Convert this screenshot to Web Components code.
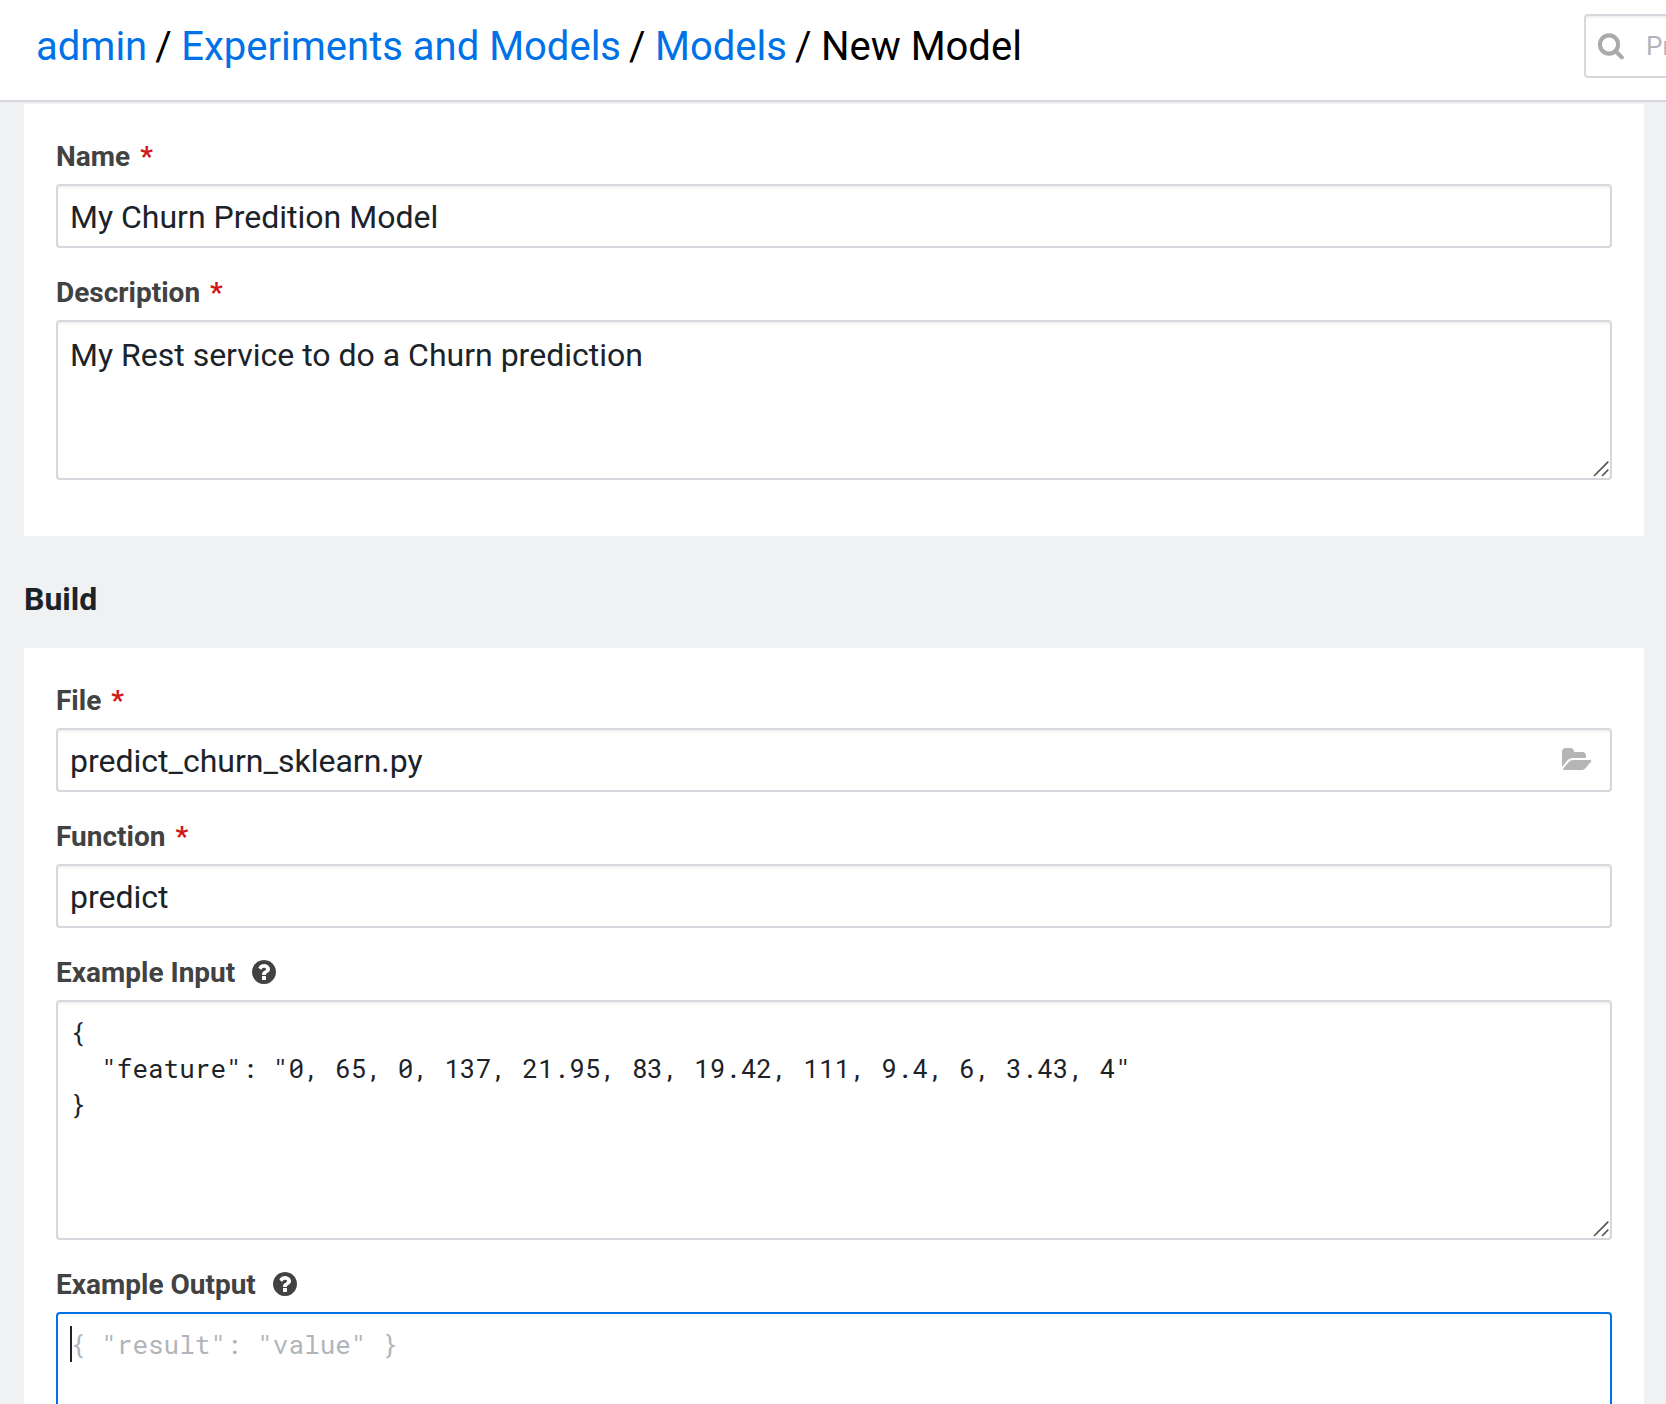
<!DOCTYPE html>
<html lang="en">
<head>
<meta charset="utf-8">
<title>New Model</title>
<style>
html, body { margin: 0; height: 100%; overflow: hidden; }
body { font-family: Roboto, "Liberation Sans", sans-serif; background: #f0f1f3; color: #1b2329; }
</style>
</head>
<body>
<app-page>
  <top-bar slot="header">
    <bread-crumbs>
      <crumb-item link>admin</crumb-item>
      <crumb-item link>Experiments and Models</crumb-item>
      <crumb-item link>Models</crumb-item>
      <crumb-item>New Model</crumb-item>
    </bread-crumbs>
    <search-box slot="end">Pr</search-box>
  </top-bar>
  <form-card>
    <form-field label="Name" required><text-box>My Churn Predition Model</text-box></form-field>
    <form-field label="Description" required><text-area style="height:160px">My Rest service to do a Churn prediction</text-area></form-field>
  </form-card>
  <section-title>Build</section-title>
  <form-card>
    <form-field label="File" required><text-box browse>predict_churn_sklearn.py</text-box></form-field>
    <form-field label="Function" required><text-box>predict</text-box></form-field>
    <form-field label="Example Input" help><text-area code style="height:240px">{
  "feature": "0, 65, 0, 137, 21.95, 83, 19.42, 111, 9.4, 6, 3.43, 4"
}</text-area></form-field>
    <form-field label="Example Output" help><text-area code focused style="height:240px">{ "result": "value" }</text-area></form-field>
  </form-card>
</app-page>
<script>
const define = (name, render) => customElements.define(name, class extends HTMLElement {
  constructor() {
    super();
    this.attachShadow({ mode: 'open' }).innerHTML = render(this);
  }
});

define('app-page', () => `
<style>
:host { display: flex; flex-direction: column; height: 100vh; overflow: hidden; }
main { display: flex; flex-direction: column; padding: 2px 22px 0 24px; }
</style>
<slot name="header"></slot><main><slot></slot></main>`);

define('top-bar', () => `
<style>
:host { display: flex; flex: none; justify-content: space-between; align-items: center; height: 102px; box-sizing: border-box; padding: 0 0 8px 36px; background: #fff; border-bottom: 2px solid #d7d7dd; overflow: hidden; }
</style>
<slot></slot><slot name="end"></slot>`);

define('bread-crumbs', () => `
<style>
:host { display: flex; padding-top: 2px; font-size: 40px; line-height: 48px; color: #000; white-space: nowrap; }
</style>
<slot></slot>`);

define('crumb-item', el => `
<style>
:host { display: flex; }
:host([link]) .label { color: #0072e7; }
.sep { padding: 0 9.5px 0 8px; }
</style>
<span class="label"><slot></slot></span>${el.hasAttribute('link') ? '<span class="sep">/</span>' : ''}`);

define('search-box', () => `
<style>
:host { display: flex; flex: none; align-items: center; width: 300px; height: 64px; margin-right: -218px; box-sizing: border-box; border: 2px solid #d7d7dd; border-radius: 4px; background: #fff; box-shadow: inset 0 2px 2px rgba(0,0,0,.06); color: #afb5ba; font-size: 26px; padding-left: 12px; gap: 21px; white-space: nowrap; overflow: hidden; }
svg { display: block; flex: none; }
</style>
<svg width="27" height="27" viewBox="0 0 27 27" fill="none" stroke="#aaa" stroke-width="4.1"><circle cx="11" cy="11.5" r="9.1"/><path d="M17.5 18L23.8 24.4" stroke-linecap="round"/></svg>
<span><slot></slot></span>`);

define('form-card', () => `
<style>
:host { display: flex; flex-direction: column; gap: 28px; background: #fff; padding: 36px 32px 56px; }
</style>
<slot></slot>`);

define('section-title', () => `
<style>
:host { display: flex; align-items: center; height: 112px; padding-top: 13px; box-sizing: border-box; font-size: 32px; font-weight: 700; }
</style>
<slot></slot>`);

define('help-icon', () => `
<style>:host { display: block; white-space: normal; } svg { display: block; }</style>
<svg width="28" height="28" viewBox="0 0 1792 1792" fill="#424242"><path d="M1024 1376v-192q0-14-9-23t-23-9h-192q-14 0-23 9t-9 23v192q0 14 9 23t23 9h192q14 0 23-9t9-23zm256-672q0-88-55.5-163t-138.5-116-170-41q-243 0-371 213-15 24 8 42l132 100q7 6 19 6 16 0 25-12 53-68 86-92 34-24 86-24 48 0 85.5 26t37.5 59q0 38-20 61t-68 45q-63 28-115.5 86.5t-52.5 125.5v36q0 14 9 23t23 9h192q14 0 23-9t9-23q0-19 21.5-49.5t54.5-49.5q32-18 49-28.5t46-35 44.5-48 28-60.5 12.5-81zm384 192q0 209-103 385.5t-279.5 279.5-385.5 103-385.5-103-279.5-279.5-103-385.5 103-385.5 279.5-279.5 385.5-103 385.5 103 279.5 279.5 103 385.5z"/></svg>`);

define('form-field', el => `
<style>
:host { display: flex; flex-direction: column; gap: 12px; }
.label { display: flex; align-items: center; height: 32px; font-size: 28px; line-height: 34px; font-weight: 700; color: #424242; white-space: pre; }
.label span { padding-top: 1px; }
.req { color: #d0171a; margin-left: 10px; }
help-icon { margin-left: 15px; }
</style>
<div class="label"><span>${el.getAttribute('label')}</span>${el.hasAttribute('required') ? '<span class="req">*</span>' : ''}${el.hasAttribute('help') ? '<help-icon></help-icon>' : ''}</div>
<slot></slot>`);

define('text-box', el => `
<style>
:host { display: flex; align-items: center; justify-content: space-between; height: 64px; box-sizing: border-box; border: 2px solid #d7d7dd; border-radius: 4px; background: #fff; box-shadow: inset 0 2px 2px rgba(0,0,0,.06); padding: 0 18px 0 12px; font-size: 32px; line-height: 38px; }
span { padding-top: 2px; }
svg { display: block; margin-top: -1px; }
</style>
<span><slot></slot></span>${el.hasAttribute('browse') ? '<svg width="30" height="28" viewBox="0 0 1920 1792" fill="#b5b5b5"><path d="M1879 952q0 31-31 66l-336 396q-43 51-120.5 86.5t-143.5 35.5h-1088q-34 0-60.5-13t-26.5-43q0-31 31-66l336-396q43-51 120.5-86.5t143.5-35.5h1088q34 0 60.5 13t26.5 43zm-343-344v160h-832q-94 0-197 47.5t-164 119.5l-337 396-5 6q0-4-.5-12.5t-.5-12.5v-960q0-92 66-158t158-66h320q92 0 158 66t66 158v32h544q92 0 158 66t66 158z"/></svg>' : ''}`);

define('text-area', el => `
<style>
:host { display: flex; position: relative; box-sizing: border-box; border: 2px solid #d7d7dd; border-radius: 4px; background: #fff; box-shadow: inset 0 2px 2px rgba(0,0,0,.06); padding: 12px; font-size: 32px; line-height: 42px; white-space: pre; }
:host([code]) { font-family: "Roboto Mono", "DejaVu Sans Mono", monospace; font-size: 26px; line-height: 36px; }
:host([focused]) { border-color: #0072e7; box-shadow: none; color: #afb5ba; }
.caret { width: 2px; height: 36px; margin-right: -2px; background: #1b2329; }
svg { position: absolute; right: 1.5px; bottom: 1px; }
</style>
${el.hasAttribute('focused') ? '<i class="caret"></i>' : ''}<span><slot></slot></span>
<svg width="16" height="17" viewBox="0 0 16 17" fill="none" stroke="#555" stroke-width="1.7" stroke-linecap="round"><path d="M1.5 15.5L14.8 2.2M9.5 15.5L14.8 10.2"/></svg>`);
</script>
</body>
</html>
